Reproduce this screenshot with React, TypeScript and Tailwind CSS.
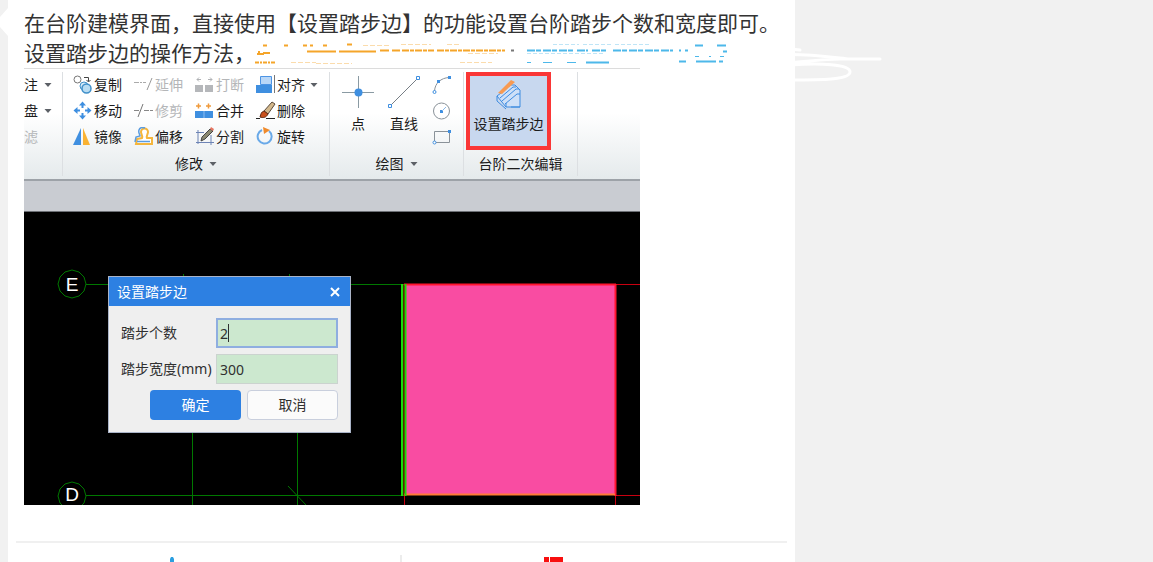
import React from "react";

type ToolProps = {
  label: string;
  icon: React.ReactNode;
  disabled?: boolean;
  menu?: boolean;
};

const Arrow: React.FC = () => (
  <svg className="w-2 h-1 shrink-0" viewBox="0 0 8 4">
    <path d="M0.5 0h7L4 4z" fill="#5c6066" />
  </svg>
);

const Tool: React.FC<ToolProps> = ({ label, icon, disabled, menu }) => (
  <button
    type="button"
    disabled={disabled}
    className="flex items-center h-[26px] gap-px whitespace-nowrap text-[#1c1c1c] disabled:text-[#b4b6b8]"
  >
    <svg className="w-5 h-5 shrink-0" viewBox="0 0 20 20" fill="none">
      {icon}
    </svg>
    {label}
    {menu && <span className="pl-1"><Arrow /></span>}
  </button>
);

const copyIcon = (
  <>
    <circle cx="4.500" cy="4.500" r="3.500" stroke="#777" />
    <path d="M11 2.500h4.500v4M13.500 5l2 2 2-2" stroke="#444" />
    <circle cx="11" cy="11" r="4" fill="#d8ebf8" stroke="#3f8fc9" />
    <circle cx="13.500" cy="13.500" r="4.500" fill="#b9dcf2" stroke="#3f8fc9" strokeWidth="1.500" />
  </>
);

const moveIcon = (
  <g fill="#3d8ee0">
    <path d="M9.500 0.500l3.500 4h-2.500v2.500h-2v-2.500H6z" />
    <path d="M9.500 18.500l3.500-4h-2.500V12h-2v2.500H6z" />
    <path d="M0.500 9.500l4-3.500v2.500H7v2H4.500V13z" />
    <path d="M18.500 9.500l-4-3.500v2.500H12v2h2.500V13z" />
  </g>
);

const mirrorIcon = (
  <>
    <path d="M8 1v17H0z" fill="#3f8fe0" />
    <path d="M10 1v17h7z" fill="#f9b233" />
  </>
);

const extendIcon = (
  <>
    <path d="M0 7.500h12" stroke="#aaa" strokeDasharray="5 1 2 1" />
    <path d="M13 15l5-12" stroke="#999" />
  </>
);

const trimIcon = (
  <>
    <path d="M0 9.500h6M10 9.500h9" stroke="#888" strokeDasharray="5 1" />
    <path d="M4 16L9 3" stroke="#777" />
  </>
);

const offsetIcon = (
  <>
    <path d="M8 11c1-2-1-4-1-6a3.500 3.500 0 0 1 7 0c0 2-2 4-1 6h5v6H2l1-5z" fill="#fff" stroke="#f5b63c" strokeWidth="2" />
    <path d="M1 15l1-5 4-1c0-2-2-3-1-6s4-3 6-2M3 14.500h13" stroke="#5a9ce0" strokeWidth="1.500" />
  </>
);

const breakIcon = (
  <>
    <path d="M0 10h8v7H0zM10 10h8v7h-8z" fill="#b5b7ba" />
    <path d="M6 4.500H2M4 2.500l-2 2 2 2M13 4.500h4M15 2.500l2 2-2 2" stroke="#b0b2b5" />
  </>
);

const mergeIcon = (
  <>
    <path d="M0 10h18v7H0z" fill="#3f8fe0" />
    <path d="M9 10v7" stroke="#8dbcf0" />
    <path d="M1 5h5M3.500 2.500v5M11 5h5M13.500 2.500v5" stroke="#f09a3c" strokeWidth="1.500" />
  </>
);

const splitIcon = (
  <>
    <path d="M1 5.500h8M1 15.500h18M3 3v14M16 8v10" stroke="#6d84b5" />
    <path d="M6 14l1-4 8-8 3 2-8 8z" fill="#8c8a72" stroke="#444" />
    <path d="M15 2l1-2 3 2-1 2z" fill="#e87560" />
  </>
);

const alignIcon = (
  <>
    <path d="M4.500 1.500h11v8h-11z" fill="#b9d7f7" stroke="#4d94e4" />
    <path d="M0 10h16v8H0z" fill="#3f8fe0" />
    <path d="M18.500 0v18" stroke="#777" />
  </>
);

const deleteIcon = (
  <>
    <path d="M16 1l3 2-7 10-4-3z" fill="#d3b88c" stroke="#5a4a3a" />
    <path d="M8 10l4 3c-2 4-5 4-8 3 1-3 1-5 4-6z" fill="#c9501c" stroke="#5f2c14" />
    <path d="M0 17.500h4M10 17.500h9" stroke="#222" />
  </>
);

const rotateIcon = (
  <>
    <path d="M13 4a7 7 0 1 1-7-1" stroke="#69a9e8" strokeWidth="2" />
    <path d="M7 0l7 3-6 4z" fill="#ef8a2b" />
  </>
);

const GroupLabel: React.FC<{ text: string; menu?: boolean }> = ({ text, menu }) => (
  <div className="flex items-center justify-center h-7 gap-1.5 whitespace-nowrap">
    {text}
    {menu && <Arrow />}
  </div>
);

const Ribbon: React.FC = () => (
  <div className="flex h-[111px] pt-[3px] border-t border-[#dcdcdc] text-sm leading-5 text-[#1c1c1c] bg-linear-to-b from-white from-40% to-[#e5eaec]">
    <div className="w-[39px] shrink-0 h-[104px] border-r border-[#dcdfe2]">
      <button type="button" className="flex items-center h-[26px] gap-1.5">注<Arrow /></button>
      <button type="button" className="flex items-center h-[26px] gap-1.5">盘<Arrow /></button>
      <button type="button" disabled className="flex items-center h-[26px] text-[#b4b6b8]">滤</button>
    </div>
    <div className="w-[267px] shrink-0 h-[104px] border-r border-[#dcdfe2]">
      <div className="grid grid-cols-[61px_61px_61px_61px] grid-rows-3 grid-flow-col pl-2.5">
        <Tool label="复制" icon={copyIcon} />
        <Tool label="移动" icon={moveIcon} />
        <Tool label="镜像" icon={mirrorIcon} />
        <Tool label="延伸" icon={extendIcon} disabled />
        <Tool label="修剪" icon={trimIcon} disabled />
        <Tool label="偏移" icon={offsetIcon} />
        <Tool label="打断" icon={breakIcon} disabled />
        <Tool label="合并" icon={mergeIcon} />
        <Tool label="分割" icon={splitIcon} />
        <Tool label="对齐" icon={alignIcon} menu />
        <Tool label="删除" icon={deleteIcon} />
        <Tool label="旋转" icon={rotateIcon} />
      </div>
      <GroupLabel text="修改" menu />
    </div>
    <div className="w-[134px] shrink-0 h-[104px] border-r border-[#dcdfe2]">
      <div className="flex h-[78px] pl-2.5">
        <button type="button" className="flex flex-col items-center w-9 pt-1 gap-1.5">
          <svg className="w-8 h-8" viewBox="0 0 32 32" fill="none">
            <path d="M0 16.500h32M16.500 0v32" stroke="#8a9aa3" />
            <circle cx="16.500" cy="16.500" r="4" fill="#3f8fe0" />
          </svg>
          点
        </button>
        <button type="button" className="flex flex-col items-center w-14 pt-1 gap-1.5">
          <svg className="w-8 h-8" viewBox="0 0 32 32" fill="none">
            <path d="M3 29L29 3" stroke="#777e85" />
            <path d="M0.500 28.500h3v3h-3zM28.500 0.500h3v3h-3z" fill="#fff" stroke="#3f8fe0" />
          </svg>
          直线
        </button>
        <div className="flex flex-col">
          <button type="button" aria-label="圆弧" className="flex items-center h-[26px]">
            <svg className="w-5 h-5" viewBox="0 0 20 20" fill="none">
              <path d="M2.500 16C3 8 9 3 17 2.500" stroke="#8a9299" />
              <circle cx="2.500" cy="17" r="1.500" fill="#fff" stroke="#3f8fe0" />
              <path d="M5 5h3v3H5zM16 1h3v3h-3z" fill="#3f8fe0" />
            </svg>
          </button>
          <button type="button" aria-label="圆" className="flex items-center h-[26px]">
            <svg className="w-5 h-5" viewBox="0 0 20 20" fill="none">
              <circle cx="9.500" cy="10" r="8" stroke="#8a9299" />
              <path d="M8 9h3v3H8z" fill="#3f8fe0" />
              <path d="M10 10l4-4" stroke="#8ab9ea" />
            </svg>
          </button>
          <button type="button" aria-label="矩形" className="flex items-center h-[26px]">
            <svg className="w-5 h-5" viewBox="0 0 20 20" fill="none">
              <path d="M2.500 4.500h15v11h-15z" stroke="#8a9299" />
              <path d="M16 3h3v3h-3z" fill="#3f8fe0" />
              <circle cx="2.500" cy="15.500" r="1.500" fill="#fff" stroke="#3f8fe0" />
            </svg>
          </button>
        </div>
      </div>
      <GroupLabel text="绘图" menu />
    </div>
    <div className="w-[114px] shrink-0 h-[104px] px-0.5 border-r border-[#dcdfe2]">
      <button
        type="button"
        className="flex flex-col items-center w-[85px] h-[78px] gap-0.5 border-4 border-[#fa3636] bg-[#c8d8ef] whitespace-nowrap"
      >
        <svg className="w-8 h-9" viewBox="0 0 32 36" fill="none">
          <path d="M4 20l13-11h5l5 5v17H13z" fill="#cfe0f7" />
          <path d="M4 20l9 11h14V14l-5-5h-4M4 20l4-3M4 20v5l9 8M7 22l13-11h3M9 25l14-12h3M12 28l12-10h3M13 31v-4M18 31h9" stroke="#3d8be0" />
          <path d="M5 17L18 4l4 2L9 18z" fill="#f79a52" />
        </svg>
        设置踏步边
      </button>
      <GroupLabel text="台阶二次编辑" />
    </div>
  </div>
);

// axis grid with the selected stair slab
const Drawing: React.FC = () => (
  <svg className="block w-full h-[293px] bg-black" viewBox="0 0 616 293" fill="none" preserveAspectRatio="xMinYMin slice">
    <path d="M62 72.500h318M62 283.500h318M168.500 220v73M273.500 220v73M264 274l18 19M159.500 62v3M265.500 62v3" stroke="#007800" />
    <path d="M48 58l7 2 5 5 2 7-2 7-5 5-7 2-7-2-5-5-2-7 2-7 5-5z" stroke="#007800" />
    <path d="M48 270l7 2 5 5 2 7-2 7-5 5-7 2-7-2-5-5-2-7 2-7 5-5z" stroke="#007800" />
    <g fill="#fff" fontFamily="Liberation Sans, sans-serif" fontSize="19" textAnchor="middle">
      <text x="48" y="79">E</text>
      <text x="48" y="289">D</text>
    </g>
    <path d="M381 72h211v211H381z" fill="#f94ca2" />
    <path d="M380 72.500h236M592 283.500h24M380.500 283v10M591.500 283v10" stroke="#c80010" />
    <path d="M380 72.500h212M591.500 72v212" stroke="#ff1430" strokeWidth="2" />
    <path d="M380 282.500h211" stroke="#ff7a35" strokeWidth="2" />
    <path d="M378 72v212M381.500 72v212" stroke="#19dc0a" strokeWidth="2" />
    <path d="M380 72v212" stroke="#a05000" />
  </svg>
);

const StepDialog: React.FC = () => (
  <form
    role="dialog"
    aria-label="设置踏步边"
    className="absolute left-[84px] top-16 w-[243px] border border-[#aab4c8] bg-[#efefef] text-sm text-[#303030]"
  >
    <header className="flex items-center justify-between h-[29px] pl-2 pr-2.5 bg-[#2d80e2] text-white">
      设置踏步边
      <button type="button" aria-label="关闭">
        <svg className="w-2.5 h-2.5" viewBox="0 0 10 10">
          <path d="M1 1l8 8M9 1L1 9" stroke="#fff" strokeWidth="2" />
        </svg>
      </button>
    </header>
    <div className="grid grid-cols-[1fr_122px] items-center gap-y-1.5 pl-3 pr-3 pt-3 whitespace-nowrap">
      <label htmlFor="count">踏步个数</label>
      <span className="relative">
        <input id="count" defaultValue="2" className="block w-full h-[30px] px-0.5 border-2 border-[#8faee0] bg-[#cce8cf] outline-none" />
        <span className="absolute left-3 top-1.5 w-px h-[18px] bg-[#303030]" />
      </span>
      <label htmlFor="width">踏步宽度(mm)</label>
      <input id="width" defaultValue="300" className="block w-full h-[30px] px-[3px] border border-[#cbd3cf] bg-[#cce8cf] outline-none" />
    </div>
    <div className="flex justify-end gap-1.5 px-3 pt-1.5 pb-3">
      <button type="submit" className="w-[91px] h-[30px] rounded-sm bg-[#2d80e2] text-white">确定</button>
      <button type="button" className="w-[91px] h-[30px] rounded-sm border border-[#c9cfdd] bg-[#fbfbfb]">取消</button>
    </div>
  </form>
);

// what is left of the struck-out part of the sentence
const Erased: React.FC = () => (
  <svg className="w-[475px] h-[30px] shrink-0" viewBox="0 0 475 30" fill="none">
    <g stroke="#f5a52a">
      <path d="M4 13v4M2 16h7M8 15h7" strokeWidth="2" />
      <path d="M0 24.500h20" strokeWidth="2" strokeDasharray="4 1 2 1" />
      <path d="M8 7.500h4M29 7.500h4M48 7.500h4M55 7.500h3M68 7.500h4M92 6.500h5" strokeWidth="2" />
      <path d="M52 13.500h29M84 13.500h37M125 12.500h9M137 12.500h8" strokeWidth="2" />
      <path d="M147 12.500h32M182 12.500h68" strokeWidth="2" strokeDasharray="7 1 4 1" />
    </g>
    <g stroke="#fbdcac">
      <path d="M36 24.500h25M61 25.500h36M108 7.500h28M146 6.500h30M192 6.500h14M205 24.500h32M213 15.500h30" strokeDasharray="5 2" />
    </g>
    <path d="M256 12.500h3" stroke="#777" strokeWidth="2" />
    <g stroke="#4db8ea">
      <path d="M272 12.500h46M322 12.500h11M337 12.500h15M358 12.500h60M424 12.500h2M430 12.500h3" strokeWidth="2" strokeDasharray="8 1 5 2" />
      <path d="M440 7.500h8M462 7.500h9M468 13.500h4" strokeWidth="2" />
      <path d="M331 24.500h23M424 23.500h7M441 23.500h20M464 23.500h4" strokeWidth="2" />
      <path d="M272 24.500h4M288 24.500h9M312 24.500h9" />
      <path d="M440 18.500h4M454 18.500h2M465 18.500h4" />
    </g>
    <g stroke="#bfe5f7">
      <path d="M272 15.500h78M298 6.500h26M328 6.500h28M360 6.500h34" strokeDasharray="4 2" />
    </g>
  </svg>
);

const App: React.FC = () => {
  return (
    <div
      className="relative min-h-dvh overflow-hidden bg-[#f1f1f1]"
      style={{ fontFamily: '"Noto Sans", "Noto Sans CJK SC", sans-serif' }}
    >
      <svg className="absolute left-0 top-2 w-2 h-7" viewBox="0 0 8 28">
        <path d="M8 0L0 9v10l8 9z" fill="#fff" />
      </svg>
      <main className="max-w-[787px] min-h-dvh ml-2 pt-2 bg-white">
        <section className="px-4">
          <div className="text-[21px] leading-[30px] text-[#333] whitespace-nowrap">
            <p>在台阶建模界面，直接使用【设置踏步边】的功能设置台阶踏步个数和宽度即可。</p>
            <p className="flex">设置踏步边的操作方法，<Erased /></p>
          </div>
          <div className="max-w-[616px] overflow-hidden">
            <Ribbon />
            <div className="h-[33px] border-t-2 border-b border-t-[#9da2a8] border-b-[#6d7075] bg-[#c9ccd2]" />
            <div className="relative">
              <Drawing />
              <StepDialog />
            </div>
          </div>
        </section>
        <footer className="grid grid-cols-2 mx-2 mt-9 pt-3 border-t-2 border-[#f0f0f0]">
          <div className="flex justify-center pt-0.5 border-r-2 border-[#ececec]">
            <svg className="w-20 h-[5px]" viewBox="0 0 80 5">
              <path d="M2 5V2l1-2h2l1 2v3z" fill="#2b9fe0" />
            </svg>
          </div>
          <div className="flex justify-center pt-0.5">
            <svg className="w-[100px] h-[5px]" viewBox="0 0 100 5">
              <path d="M0 0h5v5H0zM6 0h13v5H6z" fill="#f80f0f" />
            </svg>
          </div>
        </footer>
      </main>
      <svg className="absolute left-[780px] top-11 w-[110px] h-10" viewBox="0 0 110 40" fill="none">
        <path d="M0 4l20 2M0 11c20-2 50 2 70 4h30M100 15H60c-20 0-40 4-60 4M10 21c30-2 60-1 60 7s-30 8-60 8" stroke="#fff" strokeWidth="3" strokeLinecap="round" />
      </svg>
    </div>
  );
};

export default App;
